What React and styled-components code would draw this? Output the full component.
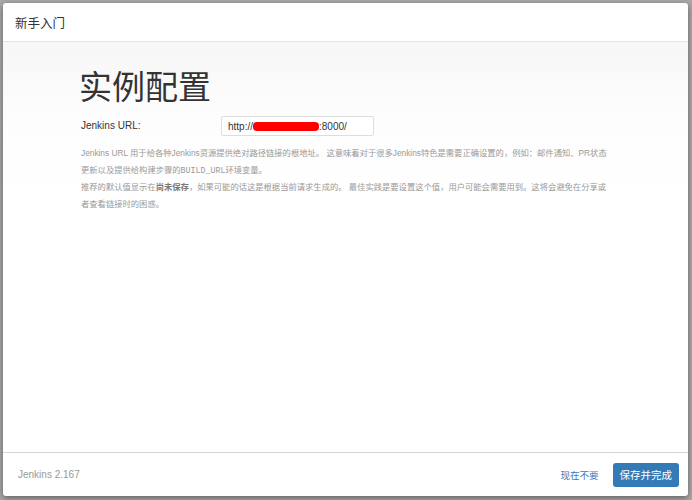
import React from 'react'
import styled, { createGlobalStyle } from 'styled-components'

const GlobalStyle = createGlobalStyle`
  html, body {
    margin: 0;
    padding: 0;
    background: #a9a9a9;
    font-family: "Liberation Sans", "Noto Sans CJK SC", sans-serif;
  }
`;

const Backdrop = styled.div`
  width: 692px;
  height: 500px;
  padding: 3px 4px 4px 3px;
  box-sizing: border-box;
  display: flex;
`;

const Modal = styled.div`
  flex: 1;
  display: flex;
  flex-direction: column;
  background: #fff;
  border-radius: 3px;
  box-shadow: 0 2px 6px rgba(0, 0, 0, 0.45);
  overflow: hidden;
`;

const Header = styled.div`
  height: 38px;
  padding: 0 12px;
  display: flex;
  align-items: center;
  border-bottom: 1px solid #e5e5e5;
  font-size: 12.5px;
  color: #333;
`;

const Body = styled.div`
  flex: 1;
  background: linear-gradient(to bottom, #f7f7f7 0%, #fdfdfd 80px, #fff 160px);
  padding: 24px 0 0 76px;
`;

const Title = styled.h1`
  margin: 0 0 6px 0;
  font-size: 33px;
  font-weight: normal;
  line-height: 44px;
  color: #333;
`;

const FieldRow = styled.div`
  display: flex;
  align-items: center;
  height: 20px;
`;

const Label = styled.label`
  width: 140px;
  padding-left: 2px;
  font-size: 10px;
  color: #333;
  margin-top: -2px;
`;

const Input = styled.div`
  width: 153px;
  height: 20px;
  box-sizing: border-box;
  border: 1px solid #ddd;
  border-radius: 2px;
  background: #fff;
  padding: 0 6px;
  display: flex;
  align-items: center;
  font-size: 10px;
  color: #333;
`;

const Redacted = styled.span`
  display: inline-block;
  width: 66px;
  height: 9px;
  background: #ff0000;
  border-radius: 4px;
`;

const Help = styled.div`
  margin-top: 9px;
  padding-left: 2px;
  font-size: 8.3px;
  line-height: 16.7px;
  color: #999;
`;

const Line = styled.div`
  white-space: nowrap;
`;

const Code = styled.code`
  font-family: "Liberation Mono", monospace;
  font-size: 8.3px;
`;

const Strong = styled.b`
  color: #777;
`;

const Footer = styled.div`
  height: 43px;
  border-top: 1px solid #d5d5d5;
  display: flex;
  align-items: center;
  padding: 0 9px 0 15px;
`;

const Version = styled.span`
  flex: 1;
  font-size: 10px;
  color: #999;
`;

const LinkButton = styled.span`
  font-size: 9.5px;
  color: #337ab7;
  margin-right: 14px;
`;

const PrimaryButton = styled.span`
  background: #337ab7;
  color: #fff;
  font-size: 10.5px;
  height: 24px;
  padding: 0 7px;
  border-radius: 3px;
  display: flex;
  align-items: center;
`;

export default function App() {
  return (
    <Backdrop>
      <GlobalStyle />
      <Modal>
        <Header>新手入门</Header>
        <Body>
          <Title>实例配置</Title>
          <FieldRow>
            <Label>Jenkins URL:</Label>
            <Input>
              http://<Redacted />:8000/
            </Input>
          </FieldRow>
          <Help>
            <Line>Jenkins URL 用于给各种Jenkins资源提供绝对路径链接的根地址。 这意味着对于很多Jenkins特色是需要正确设置的，例如：邮件通知、PR状态</Line>
            <Line>更新以及提供给构建步骤的<Code>BUILD_URL</Code>环境变量。</Line>
            <Line>推荐的默认值显示在<Strong>尚未保存</Strong>，如果可能的话这是根据当前请求生成的。 最佳实践是要设置这个值，用户可能会需要用到。这将会避免在分享或</Line>
            <Line>者查看链接时的困惑。</Line>
          </Help>
        </Body>
        <Footer>
          <Version>Jenkins 2.167</Version>
          <LinkButton>现在不要</LinkButton>
          <PrimaryButton>保存并完成</PrimaryButton>
        </Footer>
      </Modal>
    </Backdrop>
  )
}
